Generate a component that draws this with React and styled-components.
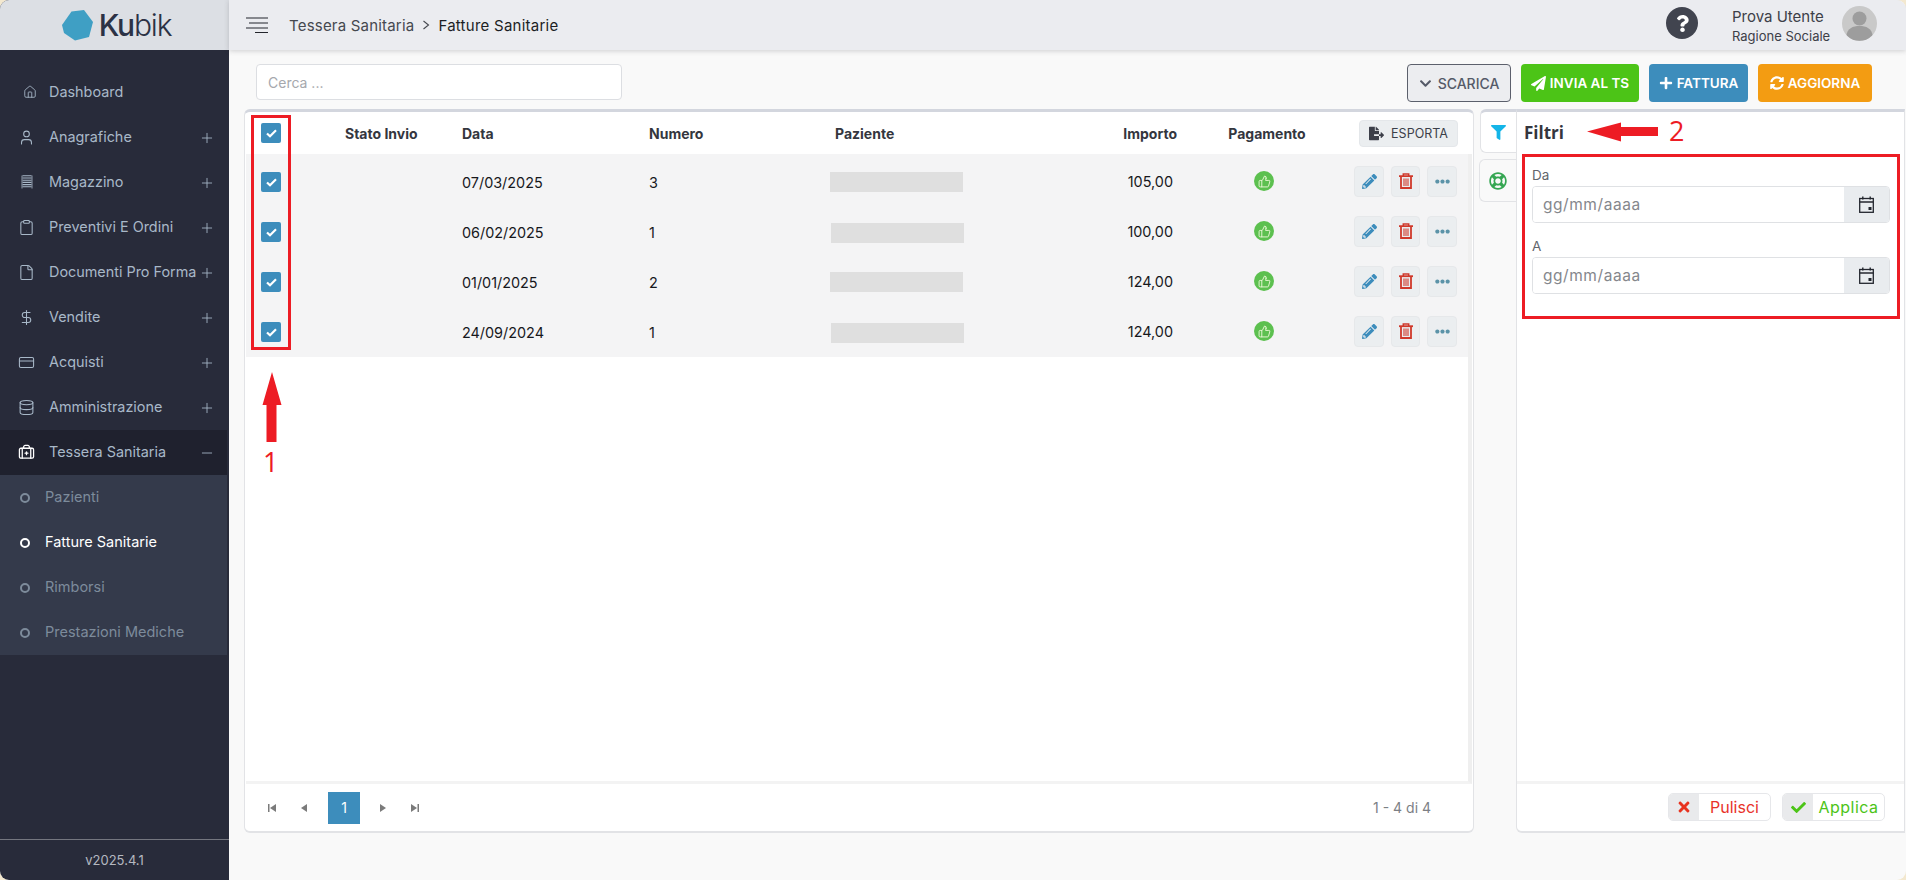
import React from "react";
import styled, { createGlobalStyle } from "styled-components";
import { Home, User, Clipboard, File, DollarSign, CreditCard, Database, BriefcaseMedical, Plus, Minus, ThumbsUp } from "lucide-react";
import { FaChevronDown, FaPaperPlane, FaPlus, FaSyncAlt, FaFileExport, FaPencilAlt, FaEllipsisH, FaFilter, FaRegLifeRing, FaTimes, FaCheck, FaQuestion } from "react-icons/fa";

const FONT = `Inter, "Noto Sans", "Liberation Sans", sans-serif`;

const Global = createGlobalStyle`
  html, body { margin: 0; padding: 0; height: 100%; background: #f3e8cf; }
  * { box-sizing: border-box; }
  body { font-family: ${FONT}; overflow: hidden; }
`;

const Shell = styled.div`
  position: relative; display: flex; width: 1906px; height: 880px; background: #f9f9f9;
  border-radius: 9px; overflow: hidden;
`;
const Sidebar = styled.aside`
  width: 229px; flex: none; display: flex; flex-direction: column; background: #282b3a;
`;
const LogoBar = styled.div`
  height: 50px; flex: none; display: flex; align-items: center; justify-content: center; gap: 6px;
  background: #dcdfe4; padding-left: 4px;
`;
const LogoText = styled.div`
  font-size: 30px; line-height: 1; color: #2b3245; font-weight: 300; letter-spacing: -1.2px;
  b { font-weight: 500; }
`;
const Nav = styled.nav`
  flex: 1; padding-top: 20px; display: flex; flex-direction: column;
`;
const NavItem = styled.div`
  height: 45px; display: flex; align-items: center; margin-right: 2px; padding-bottom: 1px;
  font-size: 14.4px; white-space: nowrap;
  color: #a8b8c8;
  background: ${p => (p.$open ? "#1f212e" : "transparent")};
`;
const NavIcon = styled.span`
  width: 17px; flex: none; display: flex; justify-content: center; margin-left: ${p => (p.$shift ? 21 : 18)}px;
  margin-right: ${p => (p.$shift ? 11 : 14)}px;
  color: ${p => (p.$open ? "#fff" : "#a8b8c8")};
`;
const NavLabel = styled.span`flex: 1; padding-bottom: 1px;`;
const NavSign = styled.span`
  width: 16px; flex: none; display: flex; color: #a8b8c8; margin-right: 12px; margin-top: 1px;
`;
const SubNav = styled.div`
  background: #343a4b; margin-right: 2px; display: flex; flex-direction: column;
`;
const SubItem = styled.div`
  height: 45px; display: flex; align-items: center; gap: 15px; padding-left: 20px; padding-bottom: 2px;
  font-size: 14.5px;
  color: ${p => (p.$active ? "#fff" : "#7d8b9b")};
`;
const SubDot = styled.span`
  width: 10px; height: 10px; border-radius: 50%; border: 2px solid ${p => (p.$active ? "#fff" : "#7d8b9b")};
  flex: none; margin-top: 2px;
`;
const Version = styled.div`
  height: 41px; flex: none; border-top: 1px solid #74767f; display: flex; align-items: center; justify-content: center;
  color: #b4b8c0; font-size: 13px;
`;

const Main = styled.main`flex: 1; min-width: 0; display: flex; flex-direction: column;`;
const TopBar = styled.header`
  height: 50px; flex: none; display: flex; align-items: center; background: #ebecf0;
  box-shadow: 0 1px 5px rgba(60,60,70,.22); padding: 0 29px 0 17px; position: relative;
`;
const Burger = styled.svg`width: 22px; height: 16px; flex: none; margin-right: 21px;`;
const Crumbs = styled.div`flex: 1; font-size: 15px; letter-spacing: .2px; color: #45484f; display: flex; gap: 6px; align-items: center;`;
const CrumbSep = styled.svg`width: 8px; height: 10px; flex: none; margin: 0 2px;`;
const CrumbNow = styled.span`color: #1c1e24; letter-spacing: .25px;`;
const Help = styled.span`
  width: 32px; height: 32px; border-radius: 50%; background: #41444f; color: #fff; display: flex;
  align-items: center; justify-content: center; margin-right: 34px; margin-top: -4px;
`;
const UserBox = styled.div`
  display: flex; flex-direction: column; margin-right: 8px; gap: 2px; color: #3d4048; width: 102px; white-space: nowrap;
`;
const UserName = styled.span`font-size: 15px;`;
const UserOrg = styled.span`font-size: 13px;`;
const Avatar = styled.svg`width: 35px; height: 35px; border-radius: 50%; flex: none; margin-top: -3px;`;

const Toolbar = styled.div`
  height: 59px; flex: none; display: flex; align-items: flex-start; padding: 14px 34px 0 27px; gap: 10px;
`;
const Search = styled.input`
  width: 366px; height: 36px; border: 1px solid #dcdee2; border-radius: 4px; background: #fff; margin-right: auto;
  padding: 0 11px; font: 14px ${FONT}; outline: none;
  &::placeholder { color: #a6a8ad; }
`;
const ActionBtn = styled.button`
  height: 38px; width: ${p => p.$w}px; border-radius: 4px; display: flex; align-items: center; justify-content: center;
  gap: 4px; font: 600 13.5px ${FONT}; padding: 0; color: #fff; background: ${p => p.$bg}; border: none;
`;
const OutlineBtn = styled(ActionBtn)`
  color: #555a68; background: #ecedf0; border: 1px solid #5c606c; font-weight: 500; font-size: 14px; gap: 6px;
`;

const Panels = styled.div`display: flex; height: 724px; padding-left: 15px; padding-right: 1px;`;
const TablePanel = styled.section`
  width: 1230px; flex: none; background: #fff; display: flex; flex-direction: column; overflow: hidden;
  border: 1px solid #e2e3e6; border-width: 3px 1px 2px 1px; border-top-color: #d3d6de; border-radius: 6px;
`;
const TABLE_COLS = "99px 117px 187px 186px 225px 117px 174px 1fr";
const HeadRow = styled.div`
  height: 42px; flex: none; display: grid; grid-template-columns: ${TABLE_COLS}; align-items: center;
  padding-right: 15px; padding-left: 1px; font-size: 14px; font-weight: 700; color: #34363e;
`;
const TableBody = styled.div`
  flex: 1; border-right: 4px solid #efefef; border-bottom: 3px solid #f3f3f3; margin-left: 1px; margin-right: 1px;
`;
const Rows = styled.div`background: #f4f4f5; padding-top: 3px;`;
const Row = styled.div`
  height: 50px; display: grid; grid-template-columns: ${TABLE_COLS}; align-items: center; padding-right: 11px;
  font-size: 14.4px; color: #17181c;
`;
const CheckCell = styled.div`padding-left: 15px; display: flex;`;
const Check = styled.span`
  width: 20px; height: 20px; border-radius: 2px; background: #3d8dbc; display: flex; align-items: center; justify-content: center;
`;
const RightCell = styled.div`text-align: right; padding-right: ${p => p.$pr || 0}px; margin-top: ${p => p.$mt || 0}px;`;
const CenterCell = styled.div`display: flex; justify-content: center; text-align: center; padding-left: ${p => p.$pl || 0}px;`;
const Name = styled.div`
  width: 133px; height: 20px; background: #dfdfdf; margin-left: ${p => p.$ml}px; margin-top: ${p => p.$mt || 0}px;
`;
const Thumb = styled.span`
  width: 20px; height: 20px; border-radius: 50%; background: #5cc04f; display: flex; align-items: center; justify-content: center;
  color: #eef8d8; margin-top: -2px;
`;
const Actions = styled.div`display: flex; justify-content: flex-end; gap: 7px; margin-top: -2px;`;
const RowBtn = styled.span`
  width: ${p => p.$w || 30}px; height: 31px; background: #ebeef0; border: 1px solid #e6e8ea; border-radius: 4px; display: flex;
  align-items: center; justify-content: center; color: ${p => p.$c};
`;
const Export = styled.div`
  justify-self: end; height: 27px; width: 99px; background: #ebeef0; border: 1px solid #e4e7ea; border-radius: 4px;
  display: flex; align-items: center; justify-content: center; gap: 7px; font-size: 12.5px; font-weight: 400; color: #3c3f49;
`;
const PageBar = styled.footer`
  height: 47px; flex: none; display: flex; align-items: center; padding: 0 42px 0 22px; color: #777;
`;
const PageArrow = styled.svg`width: 10px; height: 10px; flex: none; margin-right: ${p => p.$mr}px;`;
const PageNum = styled.span`
  width: 32px; height: 32px; background: #3d8dbc; color: #fff; font-size: 14px; display: flex; align-items: center;
  justify-content: center; margin-right: 18px;
`;
const PageInfo = styled.span`margin-left: auto; font-size: 14px; color: #7c7f85;`;

const Tabs = styled.div`
  width: 37px; flex: none; margin-left: 5px; display: flex; flex-direction: column; gap: 6px; align-items: flex-end;
`;
const Tab = styled.div`
  width: ${p => p.$w}px; height: ${p => p.$h}px; display: flex; align-items: center; justify-content: center;
  background: ${p => p.$bg}; border: 1px solid #e2e3e6; border-right: none; border-top: ${p => p.$top}; border-radius: 6px 0 0 6px;
`;
const FilterPanel = styled.section`
  flex: 1; min-width: 0; display: flex; flex-direction: column; background: #fff;
  border: 1px solid #e2e3e6; border-width: 3px 1px 2px 1px; border-top-color: #d3d6de; border-radius: 0 0 0 6px;
`;
const FilterTitle = styled.h2`
  margin: 0; height: 41px; flex: none; display: flex; align-items: center; padding-left: 7px; padding-bottom: 1px;
  font: 700 17px "Open Sans", sans-serif; color: #34363e;
`;
const FilterBody = styled.div`flex: 1; padding: 14px 14px 0 15px; display: flex; flex-direction: column;`;
const Field = styled.div`margin-bottom: 15px;`;
const FieldLabel = styled.label`display: block; font-size: 13.5px; color: #62656c; height: 19px; line-height: 16px;`;
const FieldBox = styled.div`
  height: 37px; display: flex; border: 1px solid #dfe1e4; border-radius: 4px; overflow: hidden; background: #fff;
`;
const DateInput = styled.input`
  flex: 1; min-width: 0; border: none; outline: none; padding: 0 10px; font: 15.5px ${FONT}; letter-spacing: .55px;
  &::placeholder { color: #85878c; }
`;
const Addon = styled.span`
  width: 45px; flex: none; background: #e9ecef; display: flex; align-items: center; justify-content: center;
`;
const FilterFoot = styled.footer`
  height: 50px; flex: none; border-top: 3px solid #f3f3f3; display: flex; align-items: flex-start; justify-content: flex-end;
  padding: 9px 19px 0 0; gap: 11px;
`;
const FootBtn = styled.button`
  width: 103px; height: 28px; display: flex; padding: 0; background: #fff; border: 1px solid #e6e7ea; border-radius: 5px; overflow: hidden;
  font: 16px ${FONT}; letter-spacing: ${p => p.$ls}px; color: ${p => p.$c}; align-items: stretch;
`;
const FootIcon = styled.span`
  width: 30px; flex: none; background: #e9eaec; display: flex; align-items: center; justify-content: center;
`;
const FootLabel = styled.span`flex: 1; display: flex; align-items: center; justify-content: center;`;

/* Annotations drawn over the screenshot */
const RedBox = styled.div`
  position: absolute; left: ${p => p.$x}px; top: ${p => p.$y}px; width: ${p => p.$w}px; height: ${p => p.$h}px;
  border: 3px solid #ed1c24; pointer-events: none;
`;
const RedArrow = styled.svg`
  position: absolute; left: ${p => p.$x}px; top: ${p => p.$y}px;
`;
const RedMark = styled.span`
  position: absolute; left: ${p => p.$x}px; top: ${p => p.$y}px; font: 27px/30px "Open Sans", sans-serif; color: #ed1c24;
`;

const Hex = () => (
  <svg width="31" height="31" viewBox="0 0 31 31">
    <path d="M9.5 1.5 L22 0 L31 12 L27 27 L13 30.5 L2 23 L0 15 Z" fill="#3f9fc4" />
  </svg>
);
const Stack = () => (
  <svg width="12" height="14" viewBox="0 0 12 14" fill="none" stroke="currentColor" strokeWidth="1.1">
    <path d="M1.5.8h9M1.5 3h9M1.5 5.2h9M1.5 7.4h9M1.5 9.6h9M1.5 11.8h9" />
    <path d="M1 .5v13M11 .5v13" strokeWidth=".8" />
  </svg>
);
const Trash = () => (
  <svg width="14" height="16" viewBox="0 0 14 16" fill="none" stroke="currentColor">
    <path d="M0 3.2h14" strokeWidth="1.8" />
    <path d="M4.3 3V1h5.4v2" strokeWidth="1.5" />
    <path d="M2 3.2V15h10V3.2" strokeWidth="1.8" />
    <path d="M5 5.5v7.5M7 5.5v7.5M9 5.5v7.5" strokeWidth="1.1" />
  </svg>
);
const Cal = () => (
  <svg width="15" height="17" viewBox="0 0 15 17" fill="none" stroke="#23262e">
    <rect x=".7" y="2.5" width="13.6" height="13.8" strokeWidth="1.3" />
    <path d="M.7 6h13.6" strokeWidth="1.5" />
    <path d="M3.8 .5v3M11.2 .5v3" strokeWidth="1.4" />
    <rect x="9.5" y="11" width="3" height="3" fill="#23262e" stroke="none" />
  </svg>
);
const ArrowIcon = ({ d, mr }) => (
  <PageArrow $mr={mr} viewBox="0 0 10 10"><path d={d} fill="#7b7b7b" /></PageArrow>
);
const CheckMark = () => (
  <svg width="11" height="9" viewBox="0 0 11 9" fill="none" stroke="#fff" strokeWidth="2.2"><path d="M1 4.5 4 7.2 10 1.2" /></svg>
);

const sections = [
  [Home, "Dashboard", false, true],
  [User, "Anagrafiche", true],
  [Stack, "Magazzino", true],
  [Clipboard, "Preventivi E Ordini", true],
  [File, "Documenti Pro Forma", true],
  [DollarSign, "Vendite", true],
  [CreditCard, "Acquisti", true],
  [Database, "Amministrazione", true],
];
const rows = [
  ["07/03/2025", "3", "105,00", 0, 0],
  ["06/02/2025", "1", "100,00", 1, 2],
  ["01/01/2025", "2", "124,00", 0, 0],
  ["24/09/2024", "1", "124,00", 1, 2],
];

export default function App() {
  return (
    <Shell>
      <Global />
      <Sidebar>
        <LogoBar><Hex /><LogoText><b>Ku</b>bik</LogoText></LogoBar>
        <Nav>
          {sections.map(([I, label, sign, shift]) => (
            <NavItem key={label}>
              <NavIcon $shift={shift}><I size={shift ? 14 : 17} strokeWidth={1.5} /></NavIcon>
              <NavLabel>{label}</NavLabel>
              {sign && <NavSign><Plus size={16} strokeWidth={1.3} /></NavSign>}
            </NavItem>
          ))}
          <NavItem $open>
            <NavIcon $open><BriefcaseMedical size={17} strokeWidth={1.8} /></NavIcon>
            <NavLabel>Tessera Sanitaria</NavLabel>
            <NavSign><Minus size={16} strokeWidth={1.3} /></NavSign>
          </NavItem>
          <SubNav>
            <SubItem><SubDot />Pazienti</SubItem>
            <SubItem $active><SubDot $active />Fatture Sanitarie</SubItem>
            <SubItem><SubDot />Rimborsi</SubItem>
            <SubItem><SubDot />Prestazioni Mediche</SubItem>
          </SubNav>
        </Nav>
        <Version>v2025.4.1</Version>
      </Sidebar>
      <Main>
        <TopBar>
          <Burger viewBox="0 0 22 16" stroke="#23252c" strokeWidth="1.2">
            <path d="M0 1h22M3 6h19M0 11h22M9 15.5h13" />
          </Burger>
          <Crumbs>
            Tessera Sanitaria
            <CrumbSep viewBox="0 0 8 10" fill="none" stroke="#45484f" strokeWidth="1.1"><path d="M1.5 1 6.5 5 1.5 9" /></CrumbSep>
            <CrumbNow>Fatture Sanitarie</CrumbNow>
          </Crumbs>
          <Help><FaQuestion size={17} /></Help>
          <UserBox><UserName>Prova Utente</UserName><UserOrg>Ragione Sociale</UserOrg></UserBox>
          <Avatar viewBox="0 0 35 35">
            <rect width="35" height="35" fill="#c9c9c9" />
            <circle cx="17.5" cy="12.5" r="7" fill="#9d9d9d" />
            <path d="M4 31c1-9 7-11 13.5-11S30 22 31 31c-8 5-19 5-27 0z" fill="#9d9d9d" />
          </Avatar>
        </TopBar>
        <Toolbar>
          <Search placeholder="Cerca ..." />
          <OutlineBtn $w={104}><FaChevronDown size={13} />SCARICA</OutlineBtn>
          <ActionBtn $w={118} $bg="#4cc417"><FaPaperPlane size={15} />INVIA AL TS</ActionBtn>
          <ActionBtn $w={99} $bg="#3d8dbc"><FaPlus size={14} />FATTURA</ActionBtn>
          <ActionBtn $w={114} $bg="#f39c12"><FaSyncAlt size={14} />AGGIORNA</ActionBtn>
        </Toolbar>
        <Panels>
          <TablePanel>
            <HeadRow>
              <CheckCell><Check><CheckMark /></Check></CheckCell>
              <div>Stato Invio</div>
              <div>Data</div>
              <div>Numero</div>
              <div>Paziente</div>
              <RightCell>Importo</RightCell>
              <CenterCell $pl={6}>Pagamento</CenterCell>
              <Export><FaFileExport size={15} />ESPORTA</Export>
            </HeadRow>
            <TableBody>
              <Rows>
                {rows.map(([date, num, amount, ml, mt], i) => (
                  <Row key={i}>
                    <CheckCell><Check><CheckMark /></Check></CheckCell>
                    <div />
                    <div>{date}</div>
                    <div>{num}</div>
                    <div><Name $ml={ml - 5} $mt={mt} /></div>
                    <RightCell $pr={4} $mt={-2}>{amount}</RightCell>
                    <CenterCell><Thumb><ThumbsUp size={13} strokeWidth={1.7} /></Thumb></CenterCell>
                    <Actions>
                      <RowBtn $c="#3d8dbc"><FaPencilAlt size={15} /></RowBtn>
                      <RowBtn $w={29} $c="#d0392b"><Trash /></RowBtn>
                      <RowBtn $c="#5b93a8"><FaEllipsisH size={15} /></RowBtn>
                    </Actions>
                  </Row>
                ))}
              </Rows>
            </TableBody>
            <PageBar>
              <ArrowIcon d="M1 1h1.5v8H1zM9 1v8L3 5z" mr={22} />
              <ArrowIcon d="M8 1v8L2 5z" mr={19} />
              <PageNum>1</PageNum>
              <ArrowIcon d="M2 1v8l6-4z" mr={22} />
              <ArrowIcon d="M1 1v8l6-4zM7.5 1H9v8H7.5z" mr={0} />
              <PageInfo>1 - 4 di 4</PageInfo>
            </PageBar>
          </TablePanel>
          <Tabs>
            <Tab $w={36} $h={44} $bg="#fff" $top="3px solid #d3d6de"><FaFilter size={15} color="#14b5e8" /></Tab>
            <Tab $w={37} $h={43} $bg="#f9f9f9" $top="1px solid #e2e3e6"><FaRegLifeRing size={18} color="#35a652" /></Tab>
          </Tabs>
          <FilterPanel>
            <FilterTitle>Filtri</FilterTitle>
            <FilterBody>
              <Field>
                <FieldLabel>Da</FieldLabel>
                <FieldBox><DateInput placeholder="gg/mm/aaaa" /><Addon><Cal /></Addon></FieldBox>
              </Field>
              <Field>
                <FieldLabel>A</FieldLabel>
                <FieldBox><DateInput placeholder="gg/mm/aaaa" /><Addon><Cal /></Addon></FieldBox>
              </Field>
            </FilterBody>
            <FilterFoot>
              <FootBtn $c="#e8332a" $ls={0}><FootIcon><FaTimes size={16} color="#e8331f" /></FootIcon><FootLabel>Pulisci</FootLabel></FootBtn>
              <FootBtn $c="#4cc417" $ls={0.5}><FootIcon><FaCheck size={15} color="#4cc417" /></FootIcon><FootLabel>Applica</FootLabel></FootBtn>
            </FilterFoot>
          </FilterPanel>
        </Panels>
      </Main>

      <RedBox $x={251} $y={115} $w={40} $h={235} />
      <RedBox $x={1522} $y={154} $w={378} $h={165} />
      <RedArrow $x={262} $y={372} width="20" height="70" viewBox="0 0 20 70">
        <path d="M10 0 L19.5 33 H14.5 V70 H4.5 V33 H0.5 Z" fill="#ed1c24" />
      </RedArrow>
      <RedMark $x={263} $y={447}>1</RedMark>
      <RedArrow $x={1587} $y={122} width="71" height="20" viewBox="0 0 71 20">
        <path d="M0 9.5 L34 0.5 V5 H71 V14 H34 V19.5 Z" fill="#ed1c24" />
      </RedArrow>
      <RedMark $x={1669} $y={116}>2</RedMark>
    </Shell>
  );
}
